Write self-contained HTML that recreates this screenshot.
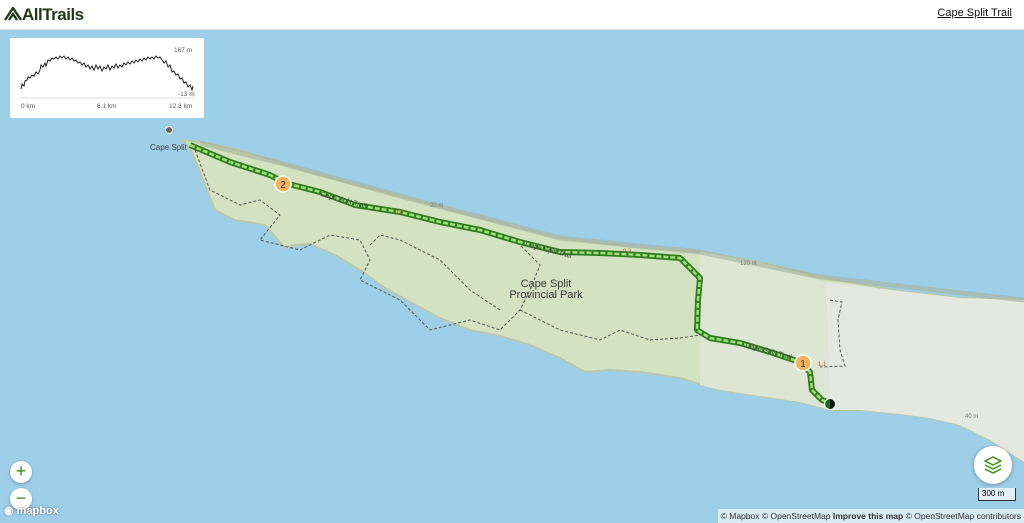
<!DOCTYPE html>
<html><head><meta charset="utf-8"><style>
*{margin:0;padding:0;box-sizing:border-box}
body{width:1024px;height:523px;overflow:hidden;font-family:"Liberation Sans",sans-serif;background:#9dcfe9;position:relative}
.hdr{position:absolute;left:0;top:0;width:1024px;height:30px;background:#fff;border-bottom:1px solid #ddd}
.logo{position:absolute;left:4px;top:5px;font-weight:bold;font-size:17px;color:#1f3a14;letter-spacing:-0.5px}
.tl{position:absolute;right:12px;top:7px;font-size:11px;color:#111;text-decoration:underline}
.prof{position:absolute;left:10px;top:38px;width:194px;height:80px;background:#fff;border-radius:2px}
.btn{position:absolute;width:22px;height:22px;border-radius:50%;background:#fff;box-shadow:0 1px 3px rgba(0,0,0,.3);color:#3a8a1e;font-size:18px;line-height:21px;text-align:center}
.layers{position:absolute;left:974px;top:446px;width:38px;height:38px;border-radius:50%;background:#fff;box-shadow:0 1px 4px rgba(0,0,0,.3)}
.scale{position:absolute;left:978px;top:488px;width:38px;height:13px;border:1px solid #333;border-top:none;background:rgba(255,255,255,.7);font-size:8px;padding-left:3px;line-height:12px}
.attr{position:absolute;right:0;bottom:0;height:14px;background:rgba(255,255,255,.6);font-size:8.5px;line-height:14px;padding:0 3px;color:#333}
</style></head><body>
<svg width="1024" height="523" style="position:absolute;left:0;top:0">
<rect width="1024" height="523" fill="#9dcfe9"/>
<polygon fill="#d3e2c0" stroke="#b9c8ad" stroke-width="2" points="183,140 200,142 240,150 280,163 330,178 400,196 480,218 560,238 640,248 700,252 760,262 820,277 900,291 960,298 1024,300 1024,462 990,440 960,425 930,418 900,414 860,410 830,410 800,402 760,396 720,390 680,378 640,372 610,370 585,372 560,358 530,345 500,336 470,330 440,318 410,302 385,288 360,270 335,255 310,244 295,245 285,248 265,225 235,220 215,210 205,185 192,152"/>
<polygon fill="#e4e8df" points="826,282 900,291 960,298 1024,300 1024,462 990,440 960,425 930,418 900,414 860,410 830,410"/>
<polygon fill="#dde5d4" points="700,252 760,262 826,282 830,410 800,402 760,396 720,390 700,385"/>
<path d="M200,143 L280,163 L400,196 L560,238 L700,252 L820,277 L1024,300" stroke="#a7b39d" stroke-width="5" fill="none" opacity=".6"/>
<g stroke="#555" stroke-width="1" stroke-dasharray="3,2" fill="none">
<path d="M195,150 L210,190 L240,205 L260,200 L280,215 L260,240 L300,250 L330,235 L360,240 L370,260 L360,280 L400,300 L430,330 L470,320 L500,330 L520,310 L530,290 L540,265 L520,245"/>
<path d="M370,245 L380,235 L400,240 L440,260 L470,290 L500,310"/>
<path d="M520,310 L560,330 L600,340 L620,330 L650,340 L680,338 L700,335"/>
<path d="M830,300 L842,302 L838,320 L840,350 L845,366 L820,367"/>
</g>
<path d="M190,145 L230,162 L270,175 L285,183 L320,192 L355,205 L400,212 L440,222 L480,230 L520,242 L560,252 L600,253 L640,255 L680,258 L690,268 L700,278 L698,300 L697,330 L710,338 L740,343 L770,352 L800,362 L810,372 L812,390 L822,400 L830,403" stroke="#2f7d1c" stroke-width="6" fill="none" stroke-linejoin="round"/>
<path d="M190,145 L230,162 L270,175 L285,183 L320,192 L355,205 L400,212 L440,222 L480,230 L520,242 L560,252 L600,253 L640,255 L680,258 L690,268 L700,278 L698,300 L697,330 L710,338 L740,343 L770,352 L800,362 L810,372 L812,390 L822,400 L830,403" stroke="#9ee07a" stroke-width="2.5" fill="none" stroke-dasharray="5,2" stroke-linejoin="round"/>
<circle cx="283" cy="184" r="8" fill="#f5b25a" stroke="#fff" stroke-width="1.5"/><text x="283" y="188" font-size="10" text-anchor="middle" fill="#333" font-family="Liberation Sans">2</text>
<circle cx="803" cy="363" r="8" fill="#f5b25a" stroke="#fff" stroke-width="1.5"/><text x="803" y="367" font-size="10" text-anchor="middle" fill="#333" font-family="Liberation Sans">1</text>
<circle cx="830" cy="404" r="6" fill="#fff"/><circle cx="830" cy="404" r="5" fill="#1d6a14"/><path d="M830,399 A5,5 0 0 1 830,409 Z" fill="#111"/>
<circle cx="169" cy="130" r="3.5" fill="#666" stroke="#fff"/>
<g font-family="Liberation Sans" fill="#444">
<text x="150" y="150" font-size="8">Cape Split</text>
<text x="546" y="287" font-size="11" text-anchor="middle" fill="#3a3a3a">Cape Split</text>
<text x="546" y="298" font-size="11" text-anchor="middle" fill="#3a3a3a">Provincial Park</text>
<text x="320" y="196" font-size="7" transform="rotate(15 320 196)">Cape Split Trail</text>
<text x="525" y="246" font-size="7" transform="rotate(15 525 246)">Cape Split Trail</text>
<text x="745" y="347" font-size="7" transform="rotate(15 745 347)">Cape Split Trail</text>
<text x="430" y="207" font-size="6" fill="#777">20 m</text>
<text x="740" y="265" font-size="6" fill="#777">120 m</text>
<text x="965" y="418" font-size="6" fill="#777">40 m</text>
<text x="395" y="214" font-size="6" fill="#c44">0.3</text>
<text x="623" y="253" font-size="6" fill="#c44">0.3</text>
<text x="818" y="366" font-size="6" fill="#c44">1.1</text>
</g>
</svg>
<div class="hdr"><div class="logo"><svg width="18" height="14" viewBox="0 0 18 14" style="vertical-align:-1px"><path d="M1,13 L9,1 L17,13 M5,13 L9,7 L13,13" stroke="#1f3a14" stroke-width="2.4" fill="none"/></svg>AllTrails</div><div class="tl">Cape Split Trail</div></div>
<div class="prof"><svg width="194" height="80" style="position:absolute;left:0;top:0">
<path d="M11,51 L12,46 L14,48 L15,43 L17,42 L18,39 L20,40 L22,37 L24,38 L26,34 L28,36 L30,32 L31,27 L33,29 L35,25 L36,28 L38,22 L40,23 L42,20 L44,21 L46,19 L48,21 L50,18 L52,20 L54,18 L56,21 L58,19 L60,22 L62,20 L64,23 L66,22 L68,25 L70,24 L72,27 L74,25 L76,29 L78,27 L80,31 L82,28 L84,32 L86,27 L88,31 L90,28 L92,33 L94,29 L96,31 L98,27 L100,32 L102,28 L104,30 L106,26 L108,30 L110,27 L112,29 L114,25 L116,27 L118,24 L120,26 L122,23 L124,25 L126,22 L128,24 L130,21 L132,23 L134,20 L136,22 L138,19 L140,21 L142,19 L144,21 L146,18 L148,20 L150,19 L152,22 L154,25 L156,23 L158,29 L160,27 L162,34 L164,33 L166,37 L168,36 L170,41 L172,40 L174,45 L176,44 L178,49 L180,47 L182,52 L183,48" stroke="#222" stroke-width="1" fill="none"/>
<line x1="10" y1="60" x2="184" y2="60" stroke="#ddd"/>
<g font-size="6.5" fill="#555" font-family="Liberation Sans"><text x="164" y="14">167 m</text><text x="168" y="58">-13 m</text><text x="11" y="70">0 km</text><text x="87" y="70">6.1 km</text><text x="159" y="70">12.3 km</text></g></svg></div>
<div class="btn" style="left:10px;top:461px">+</div>
<div class="btn" style="left:10px;top:488px">−</div>
<div style="position:absolute;left:4px;top:504px;font-size:11px;font-weight:bold;color:#fff;text-shadow:0 0 2px #666">◉ mapbox</div>
<div class="layers"><svg width="38" height="38"><path d="M19,11 L27,15 L19,19 L11,15 Z M11,19 L19,23 L27,19 M11,23 L19,27 L27,23" stroke="#4a9a2a" stroke-width="1.6" fill="none" stroke-linejoin="round"/></svg></div>
<div class="scale">300 m</div>
<div class="attr">© Mapbox © OpenStreetMap <b>Improve this map</b> © OpenStreetMap contributors</div>
</body></html>
